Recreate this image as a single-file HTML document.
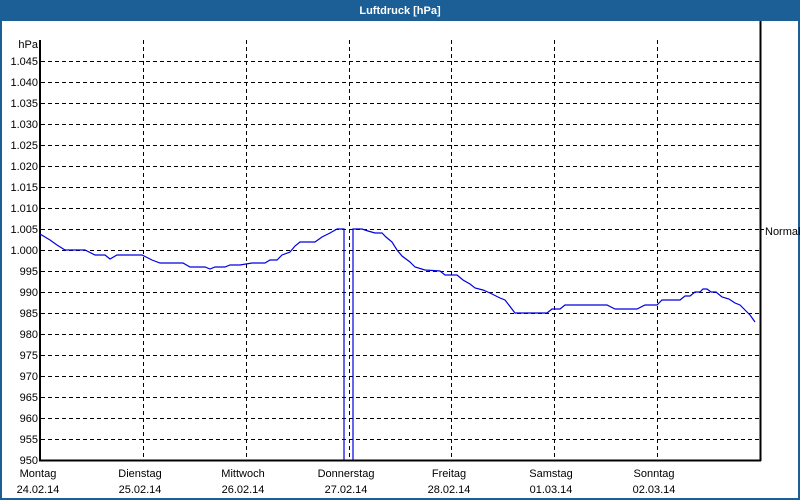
<!DOCTYPE html>
<html><head><style>
body{margin:0;width:800px;height:500px;overflow:hidden;background:#fff;font-family:"Liberation Sans",sans-serif;}
</style></head><body>
<svg width="800" height="500" xmlns="http://www.w3.org/2000/svg" style="display:block" font-family="'Liberation Sans',sans-serif" font-size="11">
<rect x="0" y="0" width="800" height="500" fill="#1b5f96"/>
<rect x="2" y="21" width="796" height="477" fill="#fff"/>
<text x="400" y="14" fill="#fff" font-weight="bold" text-anchor="middle" font-size="11">Luftdruck [hPa]</text>
<g stroke="#000" stroke-width="1" stroke-dasharray="4,3" shape-rendering="crispEdges">
<line x1="41" x2="760" y1="61.5" y2="61.5"/><line x1="41" x2="760" y1="82.5" y2="82.5"/><line x1="41" x2="760" y1="103.5" y2="103.5"/><line x1="41" x2="760" y1="124.5" y2="124.5"/><line x1="41" x2="760" y1="145.5" y2="145.5"/><line x1="41" x2="760" y1="166.5" y2="166.5"/><line x1="41" x2="760" y1="187.5" y2="187.5"/><line x1="41" x2="760" y1="208.5" y2="208.5"/><line x1="41" x2="760" y1="229.5" y2="229.5"/><line x1="41" x2="760" y1="250.5" y2="250.5"/><line x1="41" x2="760" y1="271.5" y2="271.5"/><line x1="41" x2="760" y1="292.5" y2="292.5"/><line x1="41" x2="760" y1="313.5" y2="313.5"/><line x1="41" x2="760" y1="334.5" y2="334.5"/><line x1="41" x2="760" y1="355.5" y2="355.5"/><line x1="41" x2="760" y1="376.5" y2="376.5"/><line x1="41" x2="760" y1="397.5" y2="397.5"/><line x1="41" x2="760" y1="418.5" y2="418.5"/><line x1="41" x2="760" y1="439.5" y2="439.5"/>
<line x1="143.5" x2="143.5" y1="40" y2="460"/><line x1="246.5" x2="246.5" y1="40" y2="460"/><line x1="349.5" x2="349.5" y1="40" y2="460"/><line x1="451.5" x2="451.5" y1="40" y2="460"/><line x1="554.5" x2="554.5" y1="40" y2="460"/><line x1="657.5" x2="657.5" y1="40" y2="460"/>
</g>
<g stroke="#000" stroke-width="2" shape-rendering="crispEdges" fill="none">
<line x1="40" y1="40" x2="40" y2="461"/><line x1="39" y1="460.5" x2="761" y2="460.5"/><line x1="760.5" y1="21" x2="760.5" y2="461"/>
</g>
<line x1="760" x2="764" y1="229.5" y2="229.5" stroke="#000" shape-rendering="crispEdges"/>
<polyline fill="none" stroke="#0000e0" stroke-width="1.2" points="40,234 45,237 50,240 57,245 65,250 85,250 95,255 105,255 110,259 117,255 142,255 152,260 160,263 183,263 190,267 205,267 210,269 215,267 225,267 230,265 240,265 252,263 265,263 270,260 277,260 282,255 290,252 295,246 300,242 315,242 322,237 330,233 337,229 344,229 344,460"/>
<polyline fill="none" stroke="#0000e0" stroke-width="1.2" points="353,460 353,229 362,229 368,231 375,233 382,233 386,237 392,242 397,250 402,256 410,262 415,267 425,270 440,271 445,275 457,275 463,280 470,284 475,288 483,290 490,293 500,298 505,300 515,313 547,313 552,309 560,309 565,305 607,305 615,309 637,309 645,305 657,305 662,300 680,300 685,296 690,296 695,292 700,292 703,289 707,289 711,292 716,292 722,297 729,299 735,303 740,305 745,310 750,315 755,322"/>
<g fill="#000" text-anchor="end">
<text x="38" y="48">hPa</text>
<text x="38" y="65">1.045</text><text x="38" y="86">1.040</text><text x="38" y="107">1.035</text><text x="38" y="128">1.030</text><text x="38" y="149">1.025</text><text x="38" y="170">1.020</text><text x="38" y="191">1.015</text><text x="38" y="212">1.010</text><text x="38" y="233">1.005</text><text x="38" y="254">1.000</text><text x="38" y="275">995</text><text x="38" y="296">990</text><text x="38" y="317">985</text><text x="38" y="338">980</text><text x="38" y="359">975</text><text x="38" y="380">970</text><text x="38" y="401">965</text><text x="38" y="422">960</text><text x="38" y="443">955</text><text x="38" y="464">950</text>
</g>
<text x="765" y="235" fill="#000">Normal</text>
<g fill="#000" text-anchor="middle">
<text x="38" y="477">Montag</text><text x="38" y="493">24.02.14</text>
<text x="140" y="477">Dienstag</text><text x="140" y="493">25.02.14</text>
<text x="243" y="477">Mittwoch</text><text x="243" y="493">26.02.14</text>
<text x="346" y="477">Donnerstag</text><text x="346" y="493">27.02.14</text>
<text x="449" y="477">Freitag</text><text x="449" y="493">28.02.14</text>
<text x="551" y="477">Samstag</text><text x="551" y="493">01.03.14</text>
<text x="654" y="477">Sonntag</text><text x="654" y="493">02.03.14</text>
</g>
</svg>
</body></html>
